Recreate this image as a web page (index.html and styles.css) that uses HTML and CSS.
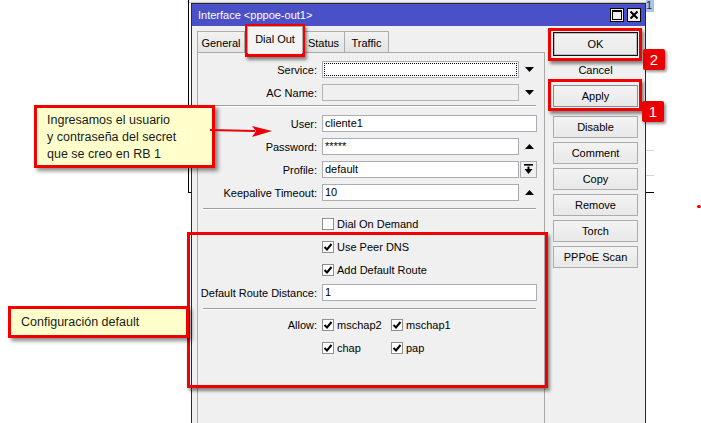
FILE: index.html
```html
<!DOCTYPE html>
<html>
<head>
<meta charset="utf-8">
<link rel="stylesheet" href="styles.css">
</head>
<body>
<div class="backdrop">
  <div class="bd-header"></div>
  <span class="bd-cell">1</span>
  <i class="bd-line l1"></i>
  <i class="bd-line l2"></i>
</div>

<div class="dialog">
  <div class="titlebar">
    <span class="title">Interface &lt;pppoe-out1&gt;</span>
    <span class="tb-btns">
      <span class="tb-btn"><svg width="10" height="10" viewBox="0 0 10 10"><rect x="0.5" y="0.5" width="9" height="9" fill="none" stroke="#000"/><rect x="0" y="0" width="10" height="2" fill="#000"/></svg></span>
      <span class="tb-btn"><svg width="10" height="10" viewBox="0 0 10 10"><path d="M1.5 1.5 L8.5 8.5 M8.5 1.5 L1.5 8.5" stroke="#000" stroke-width="2"/></svg></span>
    </span>
  </div>
  <div class="body">
    <div class="left">
      <div class="tabs">
        <div class="tab t-general">General</div>
        <div class="tab t-dial active">Dial Out</div>
        <div class="tab t-status">Status</div>
        <div class="tab t-traffic">Traffic</div>
      </div>
      <div class="panel">
        <div class="row">
          <span class="lbl">Service:</span>
          <span class="field focus"></span>
          <span class="arrow"><svg width="9" height="5" viewBox="0 0 9 5"><path d="M0 0 H9 L4.5 5 Z" fill="#000"/></svg></span>
        </div>
        <div class="row">
          <span class="lbl">AC Name:</span>
          <span class="field disabled"></span>
          <span class="arrow"><svg width="9" height="5" viewBox="0 0 9 5"><path d="M0 0 H9 L4.5 5 Z" fill="#000"/></svg></span>
        </div>
        <div class="sep s1"></div>
        <div class="row">
          <span class="lbl">User:</span>
          <span class="field wide">cliente1</span>
        </div>
        <div class="row">
          <span class="lbl">Password:</span>
          <span class="field">*****</span>
          <span class="arrow"><svg width="9" height="5" viewBox="0 0 9 5"><path d="M0 5 H9 L4.5 0 Z" fill="#000"/></svg></span>
        </div>
        <div class="row">
          <span class="lbl">Profile:</span>
          <span class="field">default</span>
          <span class="pbtn"><svg width="9" height="11" viewBox="0 0 9 11"><rect x="0" y="0" width="9" height="1.6" fill="#000"/><rect x="3.5" y="2.5" width="2" height="3" fill="#000"/><path d="M0.5 5 H8.5 L4.5 10 Z" fill="#000"/></svg></span>
        </div>
        <div class="row">
          <span class="lbl">Keepalive Timeout:</span>
          <span class="field">10</span>
          <span class="arrow"><svg width="9" height="5" viewBox="0 0 9 5"><path d="M0 5 H9 L4.5 0 Z" fill="#000"/></svg></span>
        </div>
        <div class="sep s2"></div>
        <div class="row">
          <span class="lbl"></span>
          <span class="cb"></span><span class="cbl">Dial On Demand</span>
        </div>
        <div class="row">
          <span class="lbl"></span>
          <span class="cb on"><svg width="10" height="10" viewBox="0 0 10 10"><path d="M1.5 5 L4 7.5 L8.5 2" fill="none" stroke="#000" stroke-width="2"/></svg></span><span class="cbl">Use Peer DNS</span>
        </div>
        <div class="row">
          <span class="lbl"></span>
          <span class="cb on"><svg width="10" height="10" viewBox="0 0 10 10"><path d="M1.5 5 L4 7.5 L8.5 2" fill="none" stroke="#000" stroke-width="2"/></svg></span><span class="cbl">Add Default Route</span>
        </div>
        <div class="row">
          <span class="lbl">Default Route Distance:</span>
          <span class="field wide">1</span>
        </div>
        <div class="sep s3"></div>
        <div class="row">
          <span class="lbl">Allow:</span>
          <span class="opt"><span class="cb on"><svg width="10" height="10" viewBox="0 0 10 10"><path d="M1.5 5 L4 7.5 L8.5 2" fill="none" stroke="#000" stroke-width="2"/></svg></span><span class="cbl">mschap2</span></span>
          <span class="opt"><span class="cb on"><svg width="10" height="10" viewBox="0 0 10 10"><path d="M1.5 5 L4 7.5 L8.5 2" fill="none" stroke="#000" stroke-width="2"/></svg></span><span class="cbl">mschap1</span></span>
        </div>
        <div class="row">
          <span class="lbl"></span>
          <span class="opt"><span class="cb on"><svg width="10" height="10" viewBox="0 0 10 10"><path d="M1.5 5 L4 7.5 L8.5 2" fill="none" stroke="#000" stroke-width="2"/></svg></span><span class="cbl">chap</span></span>
          <span class="opt"><span class="cb on"><svg width="10" height="10" viewBox="0 0 10 10"><path d="M1.5 5 L4 7.5 L8.5 2" fill="none" stroke="#000" stroke-width="2"/></svg></span><span class="cbl">pap</span></span>
        </div>
      </div>
    </div>
    <div class="buttons">
      <div class="btn default">OK</div>
      <div class="btn flat">Cancel</div>
      <div class="btn apply">Apply</div>
      <div class="btn group">Disable</div>
      <div class="btn">Comment</div>
      <div class="btn">Copy</div>
      <div class="btn">Remove</div>
      <div class="btn">Torch</div>
      <div class="btn">PPPoE Scan</div>
    </div>
  </div>
</div>

<div class="redbox rb-dial"></div>
<div class="redbox rb-ok"></div>
<div class="redbox rb-apply"></div>
<div class="redbox rb-config"></div>

<div class="badge b2">2</div>
<div class="badge b1">1</div>

<div class="callout c1">Ingresamos el usuario<br>y contraseña del secret<br>que se creo en RB 1</div>
<div class="callout c2">Configuración default</div>

<svg class="pointer" width="66" height="18" viewBox="0 0 66 18">
  <path d="M2 8 L47 9" stroke="#e8000a" stroke-width="2" fill="none"/>
  <path d="M44 4 L64 9 L44 15 L48 9 Z" fill="#e8000a"/>
</svg>

<span class="dot"></span>
</body>
</html>
```

FILE: styles.css
```css
* { box-sizing: border-box; }

body {
  margin: 0;
  width: 701px;
  height: 423px;
  overflow: hidden;
  position: relative;
  background: #fff;
  font-family: "Liberation Sans", Arial, sans-serif;
  font-size: 11px;
  color: #000;
}

/* window behind */
.backdrop {
  position: absolute;
  left: 188px;
  top: -3px;
  width: 466px;
  height: 196px;
  border-left: 1px solid #000;
  border-bottom: 1px solid #000;
}
.bd-header {
  height: 6px;
  background: #f0f0f0;
  border-bottom: 1px solid #c8c8c8;
}
.bd-cell {
  position: absolute;
  left: 457px;
  top: 2px;
  width: 8px;
  height: 13px;
  background: #a9c3ea;
  color: #1a2a6a;
  font-size: 11px;
  line-height: 13px;
  overflow: hidden;
}
.bd-line {
  position: absolute;
  left: 455px;
  width: 10px;
  height: 1px;
  background: #d4d4d4;
}
.bd-line.l1 { top: 153px; }
.bd-line.l2 { top: 178px; }

/* dialog */
.dialog {
  position: absolute;
  left: 191px;
  top: 3px;
  width: 455px;
  height: 440px;
  border: 1px solid #2a2a2a;
  background: #f0f0f0;
  overflow: hidden;
}
.titlebar {
  height: 22px;
  background: #4a50c8;
  color: #fff;
  display: flex;
  align-items: center;
  justify-content: space-between;
  padding: 0 4px 0 6px;
}
.title { font-size: 11px; }
.tb-btns { display: flex; gap: 3px; }
.tb-btn {
  width: 14px;
  height: 14px;
  border: 1px solid #000;
  background: #f0f0f0;
  display: flex;
  align-items: center;
  justify-content: center;
}

.body {
  display: flex;
  padding-left: 5px;
}
.left { width: 348px; flex: none; }

.tabs {
  height: 26px;
  display: flex;
  align-items: flex-end;
}
.tab {
  height: 21px;
  border: 1px solid #acacac;
  border-bottom: none;
  background: linear-gradient(#f2f2f2, #e3e3e3);
  display: flex;
  align-items: center;
  justify-content: center;
  padding-top: 1px;
}
.t-general { width: 48px; }
.t-dial { width: 56px; margin-left: 2px; }
.t-status { width: 43px; margin-left: -1px; }
.t-traffic { width: 45px; margin-left: -1px; }
.tab.active {
  height: 27px;
  background: #f4f4f4;
  margin-bottom: -1px;
  position: relative;
  z-index: 1;
  padding-bottom: 3px;
}

.panel {
  height: 380px;
  border: 1px solid #a9a9a9;
  background: #f0f0f0;
  padding-top: 8px;
  display: flex;
  flex-direction: column;
  gap: 6px;
}

.row {
  height: 17px;
  display: flex;
  align-items: center;
}
.lbl {
  width: 119px;
  flex: none;
  text-align: right;
  margin-right: 5px;
  white-space: nowrap;
}
.field {
  width: 197px;
  height: 17px;
  flex: none;
  border: 1px solid #abadb3;
  background: #fff;
  padding-left: 2px;
  line-height: 15px;
}
.field.wide { width: 215px; }
.field.focus {
  outline: 1px dotted #000;
  outline-offset: -3px;
}
.field.disabled {
  background: #f0f0f0;
  border-color: #b4b4b4;
}
.arrow {
  width: 18px;
  height: 17px;
  display: flex;
  align-items: center;
  justify-content: center;
  padding-left: 3px;
}
.pbtn {
  width: 17px;
  height: 17px;
  margin-left: 1px;
  border: 1px solid #acacac;
  background: #f0f0f0;
  display: flex;
  align-items: center;
  justify-content: center;
}

.sep {
  height: 2px;
  margin-left: 5px;
  width: 333px;
  border-top: 1px solid #a0a0a0;
  border-bottom: 1px solid #fff;
}
.sep.s1 { margin-top: -2px; margin-bottom: 2px; }
.sep.s2 { margin-top: 1px; margin-bottom: -1px; }
.sep.s3 { margin-top: 1px; }

.cb {
  width: 12px;
  height: 12px;
  flex: none;
  border: 1px solid #8e8f8f;
  background: #fff;
  display: flex;
  align-items: center;
  justify-content: center;
}
.cbl { margin-left: 3px; white-space: nowrap; }
.opt {
  width: 69px;
  flex: none;
  display: flex;
  align-items: center;
}

/* buttons */
.buttons {
  width: 85px;
  margin-left: 8px;
  padding-top: 6px;
  display: flex;
  flex-direction: column;
  gap: 4px;
}
.btn {
  height: 22px;
  border: 1px solid #acacac;
  background: linear-gradient(#f3f3f3, #e8e8e8);
  display: flex;
  align-items: center;
  justify-content: center;
}
.btn.default {
  height: 24px;
  border: 1px solid #111;
  box-shadow: inset 0 0 0 1px #bdbdbd;
}
.btn.flat {
  margin-top: -1px;
  border-color: transparent;
  background: transparent;
}
.btn.apply {
  border-color: #8c8c8c;
}
.btn.group { margin-top: 5px; }

/* annotations */
.redbox {
  position: absolute;
  border: 3px solid #f20000;
  box-shadow: 2px 3px 3px rgba(0, 0, 0, 0.45);
}
.rb-dial { left: 245px; top: 24px; width: 60px; height: 33px; }
.rb-ok { left: 548px; top: 28px; width: 94px; height: 33px; }
.rb-apply { left: 548px; top: 79px; width: 94px; height: 32px; }
.rb-config { left: 187px; top: 232px; width: 361px; height: 156px; }

.badge {
  position: absolute;
  width: 22px;
  height: 21px;
  background: #ea0000;
  color: #fff;
  font-size: 15px;
  line-height: 21px;
  text-align: center;
  border-radius: 2px;
  box-shadow: 2px 2px 3px rgba(0, 0, 0, 0.4);
}
.b2 { left: 643px; top: 49px; }
.b1 { left: 642px; top: 101px; }

.callout {
  position: absolute;
  width: 181px;
  background: #ffffcc;
  border: 3px solid #f20000;
  box-shadow: 3px 3px 4px rgba(0, 0, 0, 0.45);
  font-size: 12.5px;
  color: #1a1a1a;
  padding-left: 10px;
}
.c1 { left: 34px; top: 105px; height: 63px; padding-top: 4px; line-height: 17px; }
.c2 { left: 8px; top: 306px; height: 32px; line-height: 26px; }

.pointer { position: absolute; left: 208px; top: 122px; }

.dot {
  position: absolute;
  left: 697px;
  top: 205px;
  width: 4px;
  height: 3px;
  border-radius: 2px;
  background: #e00;
}
```
